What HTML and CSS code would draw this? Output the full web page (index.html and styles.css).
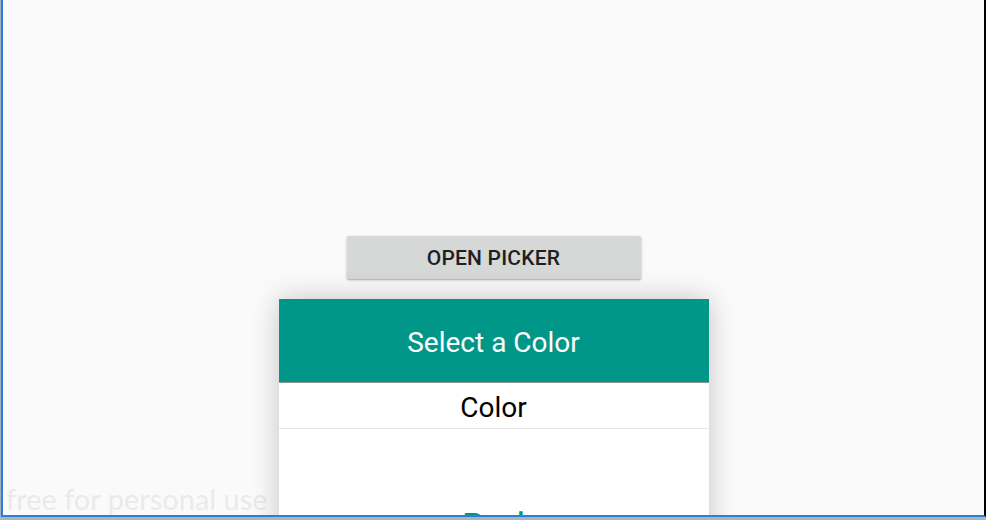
FILE: index.html
```html
<!DOCTYPE html>
<html>
<head>
<meta charset="utf-8">
<link rel="stylesheet" href="styles.css">
</head>
<body>
<div class="window">
  <div class="app">
    <button class="open-btn">OPEN PICKER</button>
    <div class="dialog">
      <div class="dialog-header">Select a Color</div>
      <div class="dialog-sub">Color</div>
      <div class="dialog-body">
        <div class="color-name">Red</div>
      </div>
    </div>
    <div class="watermark">free for personal use</div>
  </div>
</div>
</body>
</html>
```
FILE: styles.css
```css
html, body {
  margin: 0;
  padding: 0;
  width: 986px;
  height: 520px;
  overflow: hidden;
  background: #a9b3c3;
  font-family: Roboto, "Liberation Sans", sans-serif;
}
.window {
  width: 986px;
  height: 517px;
  box-sizing: border-box;
  border-left: 1px solid #9fb1c8;
  background: #a9b3c3;
}
.app {
  position: relative;
  box-sizing: border-box;
  width: 985px;
  height: 517px;
  background: #fafafa;
  border-left: 2px solid #2f7ed6;
  border-right: 2px solid #000;
  border-bottom: 2px solid #2f7ed6;
  overflow: hidden;
  display: flex;
  flex-direction: column;
  align-items: center;
  padding-top: 236px;
}
.open-btn {
  flex-shrink: 0;
  width: 294px;
  height: 43px;
  border: none;
  border-radius: 2px;
  background: #d6d7d7;
  box-shadow: 0 1px 3px rgba(0,0,0,0.25), 0 1px 1px rgba(0,0,0,0.12);
  font-family: Roboto, "Liberation Sans", sans-serif;
  font-weight: 500;
  font-size: 21px;
  color: #1f1f1f;
  letter-spacing: 0.2px;
  padding: 0;
}
.dialog {
  position: relative;
  z-index: 2;
  margin-top: 20px;
  width: 430px;
  background: #fff;
  box-shadow: 0 0 26px rgba(0,0,0,0.22);
  flex-shrink: 0;
}
.dialog-header {
  height: 84px;
  background: #009688;
  color: #fff;
  font-size: 28px;
  display: flex;
  align-items: center;
  justify-content: center;
  border-bottom: 1px solid #8a9a98;
  box-sizing: border-box;
  padding-top: 3px;
}
.dialog-sub {
  height: 46px;
  box-sizing: border-box;
  border-bottom: 1px solid #e6e6e6;
  display: flex;
  align-items: center;
  justify-content: center;
  font-size: 28px;
  color: #000;
  padding-top: 3px;
}
.dialog-body {
  height: 200px;
  display: flex;
  justify-content: center;
  padding-top: 79px;
  box-sizing: border-box;
}
.color-name {
  font-size: 37px;
  color: #009688;
  line-height: 1;
}
.watermark {
  position: absolute;
  left: 3px;
  bottom: -2px;
  z-index: 1;
  font-family: Lato, "Open Sans", sans-serif;
  font-size: 29px;
  line-height: 36px;
  color: rgba(215,215,215,0.45);
  white-space: nowrap;
}
```
